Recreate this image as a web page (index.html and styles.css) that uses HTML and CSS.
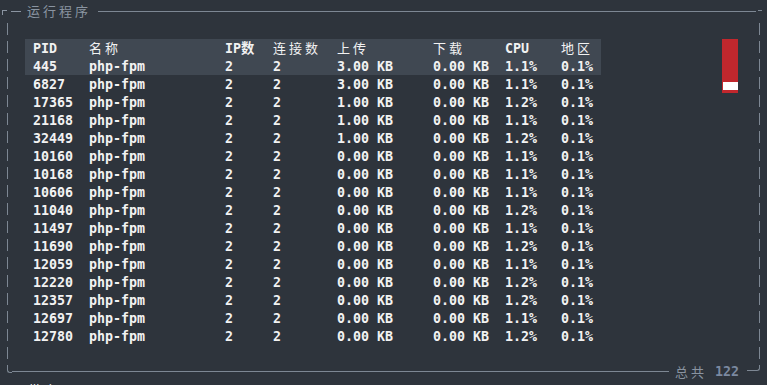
FILE: index.html
```html
<!DOCTYPE html>
<html lang="zh">
<head>
  <meta charset="UTF-8">
  <title>运行程序</title>
  <link rel="stylesheet" href="styles.css">
</head>
<body>
  <div class="top">
    <span class="tl"></span>
    <span class="dash"></span>
    <span class="title">运行程序</span>
    <span class="rule"></span>
    <span class="tr"></span>
  </div>
  <div class="frame">
    <table class="procs">
      <colgroup>
        <col class="c-pid"><col class="c-name"><col class="c-ip"><col class="c-conn">
        <col class="c-up"><col class="c-down"><col class="c-cpu"><col class="c-area">
      </colgroup>
      <thead>
        <tr><th>PID</th><th class="cjk">名称</th><th>IP数</th><th class="cjk">连接数</th><th class="cjk">上传</th><th class="cjk">下载</th><th>CPU</th><th class="cjk">地区</th></tr>
      </thead>
      <tbody>
        <tr class="sel"><td>445</td><td>php-fpm</td><td>2</td><td>2</td><td>3.00 KB</td><td>0.00 KB</td><td>1.1%</td><td>0.1%</td></tr>
        <tr><td>6827</td><td>php-fpm</td><td>2</td><td>2</td><td>3.00 KB</td><td>0.00 KB</td><td>1.1%</td><td>0.1%</td></tr>
        <tr><td>17365</td><td>php-fpm</td><td>2</td><td>2</td><td>1.00 KB</td><td>0.00 KB</td><td>1.2%</td><td>0.1%</td></tr>
        <tr><td>21168</td><td>php-fpm</td><td>2</td><td>2</td><td>1.00 KB</td><td>0.00 KB</td><td>1.1%</td><td>0.1%</td></tr>
        <tr><td>32449</td><td>php-fpm</td><td>2</td><td>2</td><td>1.00 KB</td><td>0.00 KB</td><td>1.2%</td><td>0.1%</td></tr>
        <tr><td>10160</td><td>php-fpm</td><td>2</td><td>2</td><td>0.00 KB</td><td>0.00 KB</td><td>1.1%</td><td>0.1%</td></tr>
        <tr><td>10168</td><td>php-fpm</td><td>2</td><td>2</td><td>0.00 KB</td><td>0.00 KB</td><td>1.1%</td><td>0.1%</td></tr>
        <tr><td>10606</td><td>php-fpm</td><td>2</td><td>2</td><td>0.00 KB</td><td>0.00 KB</td><td>1.1%</td><td>0.1%</td></tr>
        <tr><td>11040</td><td>php-fpm</td><td>2</td><td>2</td><td>0.00 KB</td><td>0.00 KB</td><td>1.2%</td><td>0.1%</td></tr>
        <tr><td>11497</td><td>php-fpm</td><td>2</td><td>2</td><td>0.00 KB</td><td>0.00 KB</td><td>1.1%</td><td>0.1%</td></tr>
        <tr><td>11690</td><td>php-fpm</td><td>2</td><td>2</td><td>0.00 KB</td><td>0.00 KB</td><td>1.2%</td><td>0.1%</td></tr>
        <tr><td>12059</td><td>php-fpm</td><td>2</td><td>2</td><td>0.00 KB</td><td>0.00 KB</td><td>1.1%</td><td>0.1%</td></tr>
        <tr><td>12220</td><td>php-fpm</td><td>2</td><td>2</td><td>0.00 KB</td><td>0.00 KB</td><td>1.2%</td><td>0.1%</td></tr>
        <tr><td>12357</td><td>php-fpm</td><td>2</td><td>2</td><td>0.00 KB</td><td>0.00 KB</td><td>1.2%</td><td>0.1%</td></tr>
        <tr><td>12697</td><td>php-fpm</td><td>2</td><td>2</td><td>0.00 KB</td><td>0.00 KB</td><td>1.1%</td><td>0.1%</td></tr>
        <tr><td>12780</td><td>php-fpm</td><td>2</td><td>2</td><td>0.00 KB</td><td>0.00 KB</td><td>1.2%</td><td>0.1%</td></tr>
      </tbody>
    </table>
    <div class="scroll"><div class="thumb"></div></div>
  </div>
  <div class="bottom">
    <span class="bl"></span>
    <span class="rule"></span>
    <span class="total-label">总共</span>
    <span class="total">122</span>
    <span class="br"></span>
  </div>
  <div class="next">带宽</div>
</body>
</html>
```

FILE: styles.css
```css
body {
  margin: 0;
  height: 385px;
  overflow: hidden;
  background-color: #2e343c;
  color: #f2f2f2;
  font-family: "DejaVu Sans Mono", "Noto Sans CJK SC", monospace;
}

/* top edge with title */
.top {
  display: flex;
  align-items: flex-start;
  height: 23px;
}
.tl {
  width: 4px;
  height: 4px;
  margin: 10px 0 0 2px;
  border-top: 1px solid #8a94a1;
  border-left: 1px solid #8a94a1;
}
.dash {
  width: 10px;
  height: 1px;
  margin: 11px 0 0 4px;
  background-color: #8a94a1;
}
.title {
  margin: 3px 0 0 6px;
  font-family: "Noto Sans CJK SC", sans-serif;
  font-size: 13px;
  line-height: 16px;
  letter-spacing: 3px;
  color: #8a94a1;
}
.top .rule {
  flex: 1;
  height: 1px;
  margin: 11px 0 0 7px;
  background-color: #7d8793;
}
.tr {
  width: 4px;
  height: 1px;
  margin: 10px 5px 0 2px;
  background-color: #7d8793;
}

/* frame with dashed side edges */
.frame {
  display: flex;
  justify-content: space-between;
  align-items: flex-start;
  height: 327px;
  margin: 0 7px 0 7px;
  padding: 16px 0 0 18px;
  background:
    repeating-linear-gradient(to bottom, #7d8793 0 12px, transparent 12px 18px) left top / 1px 100% no-repeat,
    repeating-linear-gradient(to bottom, #7d8793 0 12px, transparent 12px 18px) right top / 1px 100% no-repeat;
}

.procs {
  border-collapse: collapse;
  table-layout: fixed;
  width: 576px;
  font-size: 13.3px;
  font-weight: bold;
}
.procs th,
.procs td {
  box-sizing: border-box;
  height: 18px;
  padding: 1px 0 0;
  line-height: 17px;
  text-align: left;
  white-space: nowrap;
}
.procs th:first-child,
.procs td:first-child {
  padding-left: 8px;
}
.procs th.cjk {
  font-weight: normal;
  font-size: 13px;
  letter-spacing: 3px;
}
.procs thead tr,
.procs tr.sel {
  background-color: #404852;
}
.c-pid { width: 64px; }
.c-name { width: 136px; }
.c-ip { width: 48px; }
.c-conn { width: 64px; }
.c-up { width: 96px; }
.c-down { width: 72px; }
.c-cpu { width: 56px; }
.c-area { width: 40px; }

.scroll {
  display: flex;
  flex-direction: column;
  justify-content: flex-end;
  width: 15px;
  height: 51px;
  margin-right: 22px;
  padding: 0 0 3px 1px;
  background-color: #c1272d;
}
.thumb {
  height: 8px;
  background-color: #ffffff;
}

/* bottom edge with total */
.bottom {
  display: flex;
  align-items: flex-start;
  height: 12px;
}
.bl {
  width: 4px;
  height: 6px;
  margin-left: 7px;
  border-left: 1px solid #7d8793;
  border-bottom: 1px solid #7d8793;
  border-bottom-left-radius: 3px;
}
.bottom .rule {
  flex: 1;
  height: 1px;
  margin: 5px 6px 0 0;
  background-color: #7d8793;
}
.total-label {
  margin-top: -2px;
  font-family: "Noto Sans CJK SC", sans-serif;
  font-size: 13px;
  line-height: 16px;
  letter-spacing: 3px;
  color: #8a94a1;
}
.total {
  margin: -2px 0 0 8px;
  font-size: 13.3px;
  font-weight: bold;
  line-height: 16px;
  color: #7b89a0;
}
.br {
  width: 12px;
  height: 5px;
  margin: -1px 7px 0 8px;
  border-right: 1px solid #7d8793;
  border-bottom: 1px solid #7d8793;
  border-bottom-right-radius: 3px;
}

.next {
  margin: 2px 0 0 28px;
  font-family: "Noto Sans CJK SC", sans-serif;
  font-size: 13px;
  letter-spacing: 3px;
}
```
